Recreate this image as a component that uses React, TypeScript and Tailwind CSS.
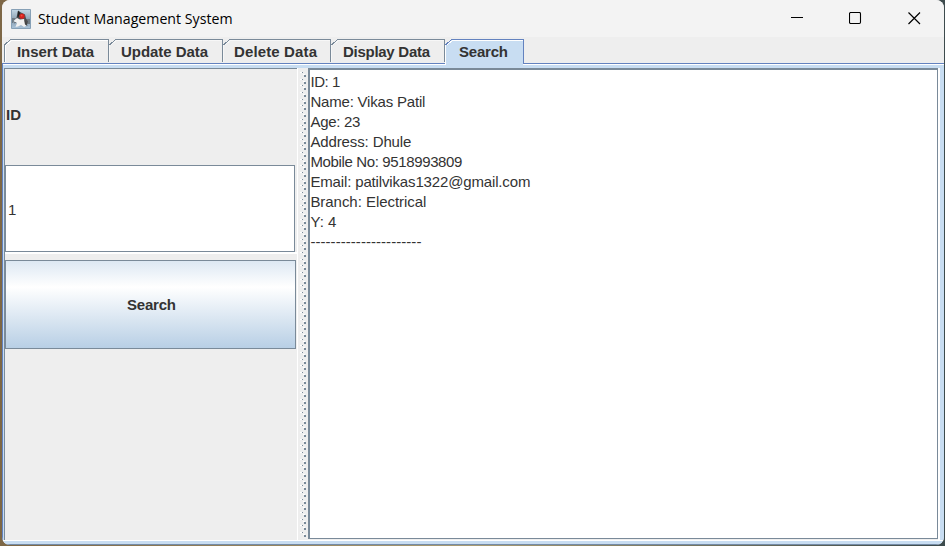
import React from "react";

const tabs = [
  { label: "Insert Data", w: 105, tw: 77, dx: 0 },
  { label: "Update Data", w: 114, tw: 87, dx: -1 },
  { label: "Delete Data", w: 108, tw: 83, dx: -2 },
  { label: "Display Data", w: 114, tw: 87, dx: -1 },
  { label: "Search", w: 79, tw: 49, dx: 1 },
];

const record: [string, number][] = [
  ["ID: 1", 30],
  ["Name: Vikas Patil", 115],
  ["Age: 23", 50],
  ["Address: Dhule", 101],
  ["Mobile No: 9518993809", 152],
  ["Email: patilvikas1322@gmail.com", 220],
  ["Branch: Electrical", 116],
  ["Y: 4", 26],
  ["----------------------", 111],
];

function Label({ text, width, bold, dx = 0 }: { text: string; width: number; bold?: boolean; dx?: number }) {
  return (
    <svg width={width} height="20" className="block overflow-visible">
      <text x={dx} y="15" textLength={width} fill="#333" fontSize="15" fontWeight={bold ? 700 : 400}>
        {text}
      </text>
    </svg>
  );
}

function JavaIcon() {
  return (
    <svg width="20" height="20" viewBox="0 0 20 20">
      <defs>
        <linearGradient id="sky" x1="0" y1="0" x2="0" y2="1">
          <stop offset="0" stopColor="#c3d8e6" />
          <stop offset=".55" stopColor="#8a9eae" />
          <stop offset="1" stopColor="#a9c3da" />
        </linearGradient>
      </defs>
      <path d="M.5 .5h19v19H.5z" fill="url(#sky)" stroke="#86a0b6" />
      <path d="M1 9h4l-3 5H1zM15 10h4v5h-3z" fill="#6f7b84" />
      <path d="M7 1.5l3 2 4 2 1 4 2 3-1 3-3-2H5l-2 1 2-4 1-4z" fill="#4b4d50" />
      <path d="M2.5 12L6 9l3 1.5 4-.5 1.5 4 .5 3-2 1-3-2-3 1.5-2.5.5L6 14z" fill="#f1f1f1" />
      <path d="M7 1.8L9 4 8 7.5 6.5 8z" fill="#222" />
      <path d="M13 10.5l2.5 3 1 3.5-2.5-1.5z" fill="#444" />
      <circle cx="11" cy="7.2" r="2.6" fill="#d7221d" />
      <circle cx="10.6" cy="6.6" r=".9" fill="#f0503f" />
    </svg>
  );
}

function Tab({ label, w, tw, dx, active, first }: { label: string; w: number; tw: number; dx: number; active: boolean; first: boolean }) {
  const line = active ? "#6382bf" : "#7a8a99";
  return (
    <div className="relative h-[25px] shrink-0 pl-[13px] pt-[3px]" style={{ width: w }}>
      <svg className="absolute inset-0 overflow-visible" width={w} height="25" shapeRendering="crispEdges">
        {active && <path d={`M1 27V6L7 1H${w - 1}V27z`} fill="#c8ddf2" />}
        <path d={`M${first ? 1.5 : 0.5} ${active ? 25 : 23}V6.5L7.5 1.5H${w - 1}`} fill="none" stroke={active || first ? "#fff" : "#f7f7f7"} />
        <path d={`${first ? "M.5 23V6" : "M.5 6"}L6.5 .5H${w - 0.5}V${active ? 25 : 23}`} fill="none" stroke={line} />
      </svg>
      <div className="relative"><Label text={label} width={tw} dx={dx} bold /></div>
    </div>
  );
}

export default function App() {
  return (
    <div className="h-[546px] w-[945px] overflow-hidden bg-[linear-gradient(90deg,#7d6746_0,#a99b72_50%,#3d4b4d_100%)] pl-[2px] pr-[1px] font-['Liberation_Sans',Arial,sans-serif]">
      <div className="flex h-[545px] flex-col overflow-hidden rounded-[8px] bg-[#eee]">
        <header className="flex h-[37px] shrink-0 items-center bg-[#f3f3f3] pl-[9px]">
          <JavaIcon />
          <svg width="195" height="22" className="ml-[7px] overflow-visible font-['Open_Sans','Noto_Sans',sans-serif]">
            <text x="0" y="16" fontSize="14.5" textLength="194.5" lengthAdjust="spacingAndGlyphs" fill="#000">Student Management System</text>
          </svg>
          <div className="ml-auto flex gap-[46px] pr-[23px]">
            <svg width="13" height="13"><path d="M1 5.5h12" stroke="#000" /></svg>
            <svg width="13" height="13"><rect x=".5" y=".5" width="11" height="11" rx="1.2" fill="none" stroke="#000" strokeWidth="1.1" /></svg>
            <svg width="13" height="13"><path d="M.5 .5l11.5 11.5M12 .5L.5 12" stroke="#000" strokeWidth="1.2" /></svg>
          </div>
        </header>
        <nav className="flex h-[26px] shrink-0 pl-[2px] pt-[2px]">
          {tabs.map((t, i) => <Tab key={t.label} {...t} active={i === 4} first={i === 0} />)}
        </nav>
        <main className="flex h-[482px] flex-col border-l border-[#6382bf]">
          <div className="flex h-px shrink-0"><i className="w-[443px] bg-[#6382bf]" /><i className="w-[77px] bg-[#c8ddf2]" /><i className="flex-1 bg-[#6382bf]" /></div>
          <div className="flex h-px shrink-0"><i className="w-[443px] bg-white" /><i className="w-[77px] bg-[#c8ddf2]" /><i className="flex-1 bg-white" /></div>
          <div className="h-[3px] shrink-0 bg-[#c8ddf2]" />
          <div className="flex h-[473px] shrink-0 border-b border-white">
            <div className="w-px bg-[#c8ddf2]" />
            <section className="h-[472px] w-[293px] border-l border-t border-[#7a8a99]">
              <div className="h-[96px] pl-[1px] pt-[36px]"><Label text="ID" width={15} bold /></div>
              <div className="h-[87px] w-[290px] border border-[#7a8a99] bg-white pl-[3px] pt-[34px]"><Label text="1" width={8} dx={-1} /></div>
              <div className="h-[2px] bg-white" />
              <button className="mt-[6px] flex h-[89px] w-[291px] items-center justify-center border border-[#7a8a99] bg-[linear-gradient(#dde8f3_0%,#fff_30%,#b8cfe5_100%)]"><Label text="Search" width={49} dx={1} bold /></button>
            </section>
            <div className="w-px bg-white" />
            <div className="w-[10px] pt-[3px]">
              <svg width="10" height="468" shapeRendering="crispEdges">
                <defs>
                  <pattern id="bumps" width="10" height="20" patternUnits="userSpaceOnUse">
                    <path d="M2 1h2v1H2zM2 8h2v1H2zM2 14h2v1H2zM5 3h2v1H5zM5 10h2v1H5zM5 16h2v1H5z" fill="#fff" />
                    <path d="M4 1h1v1H4zM4 8h1v1H4zM4 14h1v1H4zM6 4h2v2H6zM6 11h2v2H6zM6 17h2v2H6z" fill="#7a8a99" />
                  </pattern>
                </defs>
                <rect width="10" height="468" fill="url(#bumps)" />
              </svg>
            </div>
            <section className="h-[471px] w-[630px] border-b border-l-2 border-r border-t-2 border-[#7a8a99] bg-white pt-[2px]">
              {record.map(([text, width]) => <Label key={text} text={text} width={width} dx={0.4} />)}
            </section>
            <div className="w-[2px] bg-white" />
            <div className="flex-1 bg-[#c8ddf2]" />
          </div>
          <div className="h-[3px] shrink-0 bg-[#c8ddf2]" />
          <div className="h-px shrink-0 bg-[#748ba6]" />
        </main>
      </div>
    </div>
  );
}
